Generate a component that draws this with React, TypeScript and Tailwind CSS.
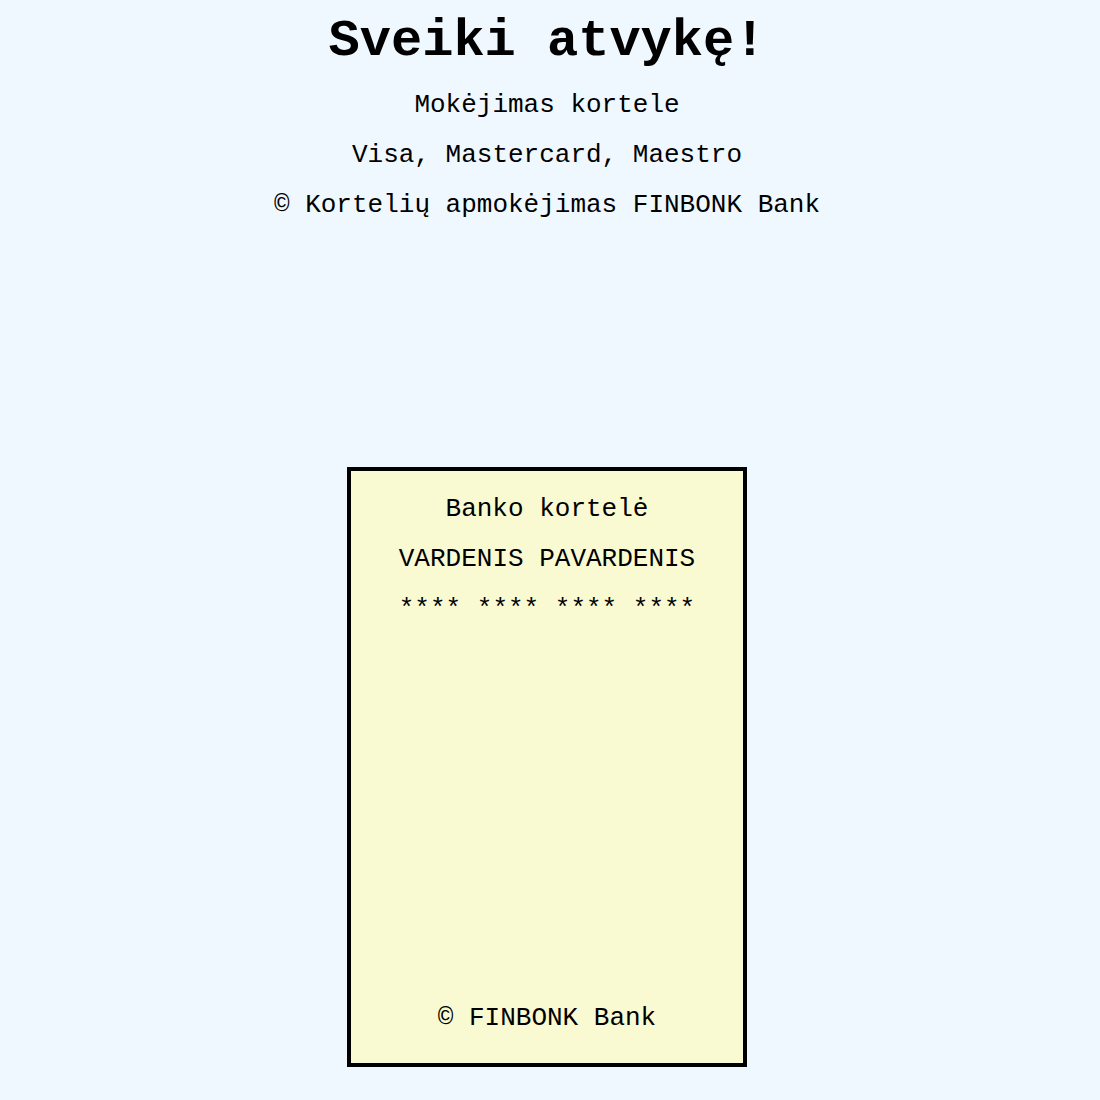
import React from 'react';

const mono = "font-['Liberation_Mono','Courier_New',monospace]";

const App = () => {
  return (
    <div className={`min-h-[1100px] bg-[#f0f8ff] text-black ${mono}`}>
      <div className="w-[1094px] flex flex-col items-center pt-[12px]">
        <h1 className="text-[52px] font-bold leading-[60px]">Sveiki atvykę!</h1>
        <div className="mt-[18px] flex flex-col items-center gap-[20px] text-[26px] leading-[30px]">
          <p>Mokėjimas kortele</p>
          <p>Visa, Mastercard, Maestro</p>
          <p>© Kortelių apmokėjimas FINBONK Bank</p>
        </div>

        <div className="mt-[247px] w-[400px] h-[600px] border-4 border-black bg-[#fafad2] flex flex-col items-center justify-between pt-[23px] pb-[30px] text-[26px] leading-[30px]">
          <div className="flex flex-col items-center gap-[20px]">
            <p>Banko kortelė</p>
            <p>VARDENIS PAVARDENIS</p>
            <p>**** **** **** ****</p>
          </div>
          <p>© FINBONK Bank</p>
        </div>
      </div>
    </div>
  );
};

export default App;
